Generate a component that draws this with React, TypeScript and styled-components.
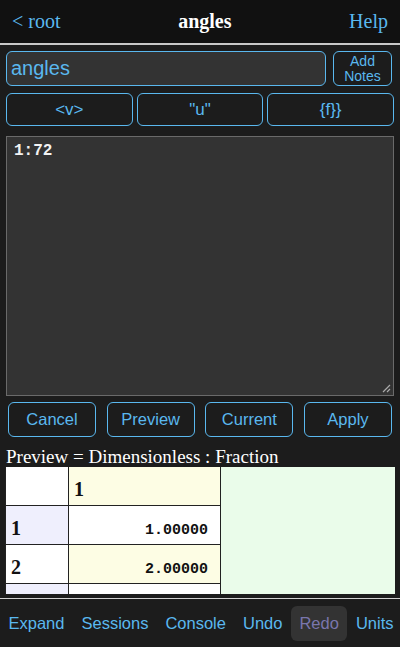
import React from "react";
import styled, { createGlobalStyle } from "styled-components";

const GlobalStyle = createGlobalStyle`
  html, body {
    margin: 0;
    padding: 0;
    background: #1c1c1c;
  }
  #root {
    height: 647px;
  }
`;

const blue = "#5ab8ef";

const Page = styled.div`
  display: flex;
  flex-direction: column;
  height: 647px;
  background: #1c1c1c;
  overflow: hidden;
`;

const Header = styled.div`
  height: 43px;
  flex: none;
  background: #111;
  border-bottom: 2px solid #c8c8c8;
  display: flex;
  align-items: center;
  justify-content: space-between;
  padding: 0 12px;
  font-family: "Liberation Serif", serif;
  font-size: 20px;
`;

const NavLink = styled.span`
  color: ${blue};
`;

const Title = styled.span`
  color: #fff;
  font-weight: bold;
`;

const Body = styled.div`
  flex: 1;
  display: flex;
  flex-direction: column;
  padding: 6px 6px 0 6px;
  font-family: "Liberation Sans", Arial, sans-serif;
`;

const NameRow = styled.div`
  display: flex;
  gap: 7px;
  height: 35px;
  padding-right: 2px;
`;

const NameInput = styled.div`
  flex: 1;
  box-sizing: border-box;
  border: 1.5px solid ${blue};
  border-radius: 6px;
  background: #333;
  color: ${blue};
  font-size: 20px;
  display: flex;
  align-items: center;
  padding-left: 4px;
`;

const OutlineButton = styled.div<{ $size?: number }>`
  box-sizing: border-box;
  border: 1.5px solid ${blue};
  border-radius: 6px;
  background: #1c1c1c;
  color: ${blue};
  font-size: ${(p) => p.$size ?? 16.5}px;
  line-height: 1.05;
  display: flex;
  align-items: center;
  justify-content: center;
  text-align: center;
`;

const NotesButton = styled(OutlineButton)`
  width: 59px;
`;

const TypeRow = styled.div`
  display: grid;
  grid-template-columns: 1fr 1fr 1fr;
  gap: 4px;
  height: 33px;
  margin-top: 7px;
`;

const Editor = styled.div`
  position: relative;
  margin-top: 10px;
  height: 260px;
  box-sizing: border-box;
  border: 1.5px solid #6a6a6a;
  background: #333;
  color: #f2f2f2;
  font-family: "Liberation Mono", monospace;
  font-weight: bold;
  font-size: 16px;
  padding: 5px 7px;
`;

const Grip = styled.svg`
  position: absolute;
  right: 2px;
  bottom: 2px;
`;

const ActionRow = styled.div`
  display: flex;
  justify-content: space-between;
  padding: 0 2px;
  margin-top: 6px;
  height: 35px;
`;

const ActionButton = styled(OutlineButton)`
  width: 88px;
`;

const Caption = styled.div`
  font-family: "Liberation Serif", serif;
  font-size: 19px;
  color: #fff;
  margin-top: 9px;
  line-height: 21px;
  height: 21px;
  white-space: nowrap;
`;

const TableWrap = styled.div`
  height: 127px;
  margin: 0 -1px;
  overflow: hidden;
  display: flex;
  background: #eafcea;
  border-left: 1px solid #222;
`;

const Grid = styled.div`
  display: grid;
  grid-template-columns: 62px 151px;
  grid-auto-rows: 38px;
  border-right: 1px solid #222;
  background: #222;
  gap: 1px;
  align-content: start;
`;

const Cell = styled.div<{ $bg: string; $mono?: boolean }>`
  background: ${(p) => p.$bg};
  color: #111;
  display: flex;
  align-items: flex-end;
  justify-content: ${(p) => (p.$mono ? "flex-end" : "flex-start")};
  padding: 0 ${(p) => (p.$mono ? "12px" : "5px")} ${(p) => (p.$mono ? "5px" : "4px")} 5px;
  font-family: ${(p) =>
    p.$mono ? '"Liberation Mono", monospace' : '"Liberation Serif", serif'};
  font-weight: bold;
  font-size: ${(p) => (p.$mono ? "15px" : "20px")};
`;

const Footer = styled.div`
  flex: none;
  margin-top: 4px;
  height: 48px;
  border-top: 1.5px solid #d0d0d0;
  background: #1c1c1c;
  display: flex;
  align-items: center;
  justify-content: space-between;
  padding: 0 1px 0 0;
  font-family: "Liberation Sans", Arial, sans-serif;
  font-size: 16.5px;
`;

const Tab = styled.span<{ $disabled?: boolean }>`
  color: ${(p) => (p.$disabled ? "#7a76ad" : blue)};
  background: ${(p) => (p.$disabled ? "#333" : "transparent")};
  border-radius: 6px;
  padding: 8px 8.5px;
`;

const lavender = "#efeffd";
const cream = "#fdfde4";

export default function App() {
  return (
    <Page>
      <GlobalStyle />
      <Header>
        <NavLink>&lt; root</NavLink>
        <Title>angles</Title>
        <NavLink>Help</NavLink>
      </Header>
      <Body>
        <NameRow>
          <NameInput>angles</NameInput>
          <NotesButton $size={14}>
            Add
            <br />
            Notes
          </NotesButton>
        </NameRow>
        <TypeRow>
          <OutlineButton $size={17}>&lt;v&gt;</OutlineButton>
          <OutlineButton $size={17}>"u"</OutlineButton>
          <OutlineButton $size={17}>{"{f}}"}</OutlineButton>
        </TypeRow>
        <Editor>
          1:72
          <Grip width="10" height="10" viewBox="0 0 10 10">
            <path d="M9 2 L2 9 M9 6 L6 9" stroke="#aaa" strokeWidth="1.2" />
          </Grip>
        </Editor>
        <ActionRow>
          <ActionButton>Cancel</ActionButton>
          <ActionButton>Preview</ActionButton>
          <ActionButton>Current</ActionButton>
          <ActionButton>Apply</ActionButton>
        </ActionRow>
        <Caption>Preview = Dimensionless : Fraction</Caption>
        <TableWrap>
          <Grid>
            <Cell $bg="#fff" />
            <Cell $bg={cream}>1</Cell>
            <Cell $bg={lavender}>1</Cell>
            <Cell $bg="#fff" $mono>
              1.00000
            </Cell>
            <Cell $bg="#fff">2</Cell>
            <Cell $bg={cream} $mono>
              2.00000
            </Cell>
            <Cell $bg={lavender} />
            <Cell $bg="#fff" $mono />
          </Grid>
        </TableWrap>
      </Body>
      <Footer>
        <Tab>Expand</Tab>
        <Tab>Sessions</Tab>
        <Tab>Console</Tab>
        <Tab>Undo</Tab>
        <Tab $disabled>Redo</Tab>
        <Tab>Units</Tab>
      </Footer>
    </Page>
  );
}
